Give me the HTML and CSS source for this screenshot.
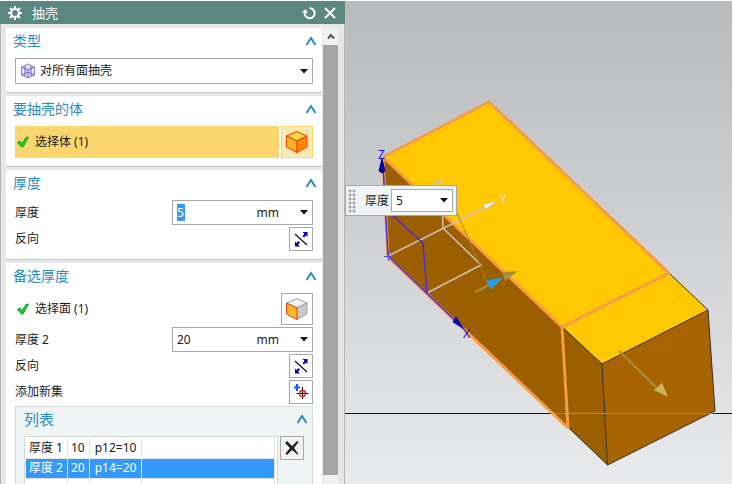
FILE: index.html
```html
<!DOCTYPE html>
<html lang="zh-CN">

<head>
    <meta charset="UTF-8">
    <meta name="viewport" content="width=device-width, initial-scale=1.0">
    <title>抽壳</title>
    <link rel="stylesheet" href="styles.css">
</head>

<body>
    <!-- shared symbols -->
    <svg class="defs" width="0" height="0" aria-hidden="true">
        <symbol id="chevron" viewBox="0 0 12 10">
            <path d="M1.500 9L6 2l4.500 7" fill="none" stroke="#2d8bbd" stroke-width="2"/>
        </symbol>
        <symbol id="check" viewBox="0 0 14 14">
            <path d="M1.500 7.500L4 6l2 3 4-6.500 2.500-.5L7 12H5.500z" fill="#19d234" stroke="#0c9c20" stroke-width="1"/>
        </symbol>
        <symbol id="swap" viewBox="0 0 16 16">
            <path d="M2 3l12 11" stroke="#111" stroke-width="1.200"/>
            <path d="M14.500 1v5l-1.500-1.500-2 2-1.500-1.500L11.500 3 9.500 1zM2 15.500v-5L3.500 12l2-2L7 11.500 5 13.500 7 15.500z" fill="#0000a8"/>
        </symbol>
    </svg>

    <section class="panel">
        <header class="titlebar">
            <svg width="14" height="14" viewBox="0 0 14 14" fill="none" stroke="#fff">
                <circle cx="7" cy="7" r="4" stroke-width="2.200"/>
                <path d="M7 0v2.500M7 11.500V14M0 7h2.500M11.500 7H14M2 2l2 2M10 10l2 2M12 2l-2 2M4 10l-2 2" stroke-width="2"/>
            </svg>
            <h1>抽壳</h1>
            <button type="button" class="title-btn" aria-label="重置">
                <svg width="14" height="14" viewBox="0 0 14 14">
                    <path d="M7.500 2.200A5 5 0 1 1 3 5.500" fill="none" stroke="#fff" stroke-width="2"/>
                    <path d="M0 6.500L3.500 3l2.500 4z" fill="#fff"/>
                </svg>
            </button>
            <button type="button" class="title-btn" aria-label="关闭">
                <svg width="12" height="12" viewBox="0 0 12 12">
                    <path d="M1 1l10 10M11 1L1 11" stroke="#fff" stroke-width="2"/>
                </svg>
            </button>
        </header>

        <div class="panel-body">
            <div class="groups">
                <section class="group">
                    <div class="group-head">
                        <h2>类型</h2>
                        <button type="button" class="fold" aria-label="折叠类型"><svg width="12" height="10"><use href="#chevron"/></svg></button>
                    </div>
                    <div class="type-box">
                        <svg width="16" height="16" viewBox="0 0 16 16" fill="#e4e0f8" stroke="#85859c">
                            <path d="M8 1l6.500 3v8L8 15l-6.500-3V4z"/>
                            <path d="M1.500 4L8 7l6.500-3M8 7v8M1.500 12L8 9l6.500 3M5 3v10M11 3v10" fill="none" stroke="#7562d0" stroke-width="1"/>
                        </svg>
                        <select aria-label="类型">
                            <option>对所有面抽壳</option>
                        </select>
                    </div>
                </section>

                <section class="group">
                    <div class="group-head">
                        <h2>要抽壳的体</h2>
                        <button type="button" class="fold" aria-label="折叠要抽壳的体"><svg width="12" height="10"><use href="#chevron"/></svg></button>
                    </div>
                    <div class="row pick active">
                        <span class="pick-label"><svg width="14" height="14"><use href="#check"/></svg>选择体 (1)</span>
                        <button type="button" class="tool big" aria-label="选择体">
                            <svg width="24" height="24" viewBox="0 0 24 24" stroke="#f03a10" stroke-linejoin="round">
                                <path d="M12 1.500L22 6l-10 5L1.500 6z" fill="#ffd83a"/>
                                <path d="M1.500 6L12 11v11.500L1.500 17z" fill="#ffb51c"/>
                                <path d="M22 6l-10 5v11.500L22 17z" fill="#ff8a08"/>
                            </svg>
                        </button>
                    </div>
                </section>

                <section class="group">
                    <div class="group-head">
                        <h2>厚度</h2>
                        <button type="button" class="fold" aria-label="折叠厚度"><svg width="12" height="10"><use href="#chevron"/></svg></button>
                    </div>
                    <div class="row">
                        <label for="thickness">厚度</label>
                        <div class="field">
                            <span class="value"><input id="thickness" class="selected-text" type="text" value="5"></span>
                            <span class="unit">mm</span>
                            <button type="button" class="drop" aria-label="厚度选项"></button>
                        </div>
                    </div>
                    <div class="row">
                        <span>反向</span>
                        <button type="button" class="tool" aria-label="反向"><svg width="16" height="16"><use href="#swap"/></svg></button>
                    </div>
                </section>

                <section class="group">
                    <div class="group-head">
                        <h2>备选厚度</h2>
                        <button type="button" class="fold" aria-label="折叠备选厚度"><svg width="12" height="10"><use href="#chevron"/></svg></button>
                    </div>
                    <div class="row pick">
                        <span class="pick-label"><svg width="14" height="14"><use href="#check"/></svg>选择面 (1)</span>
                        <button type="button" class="tool big" aria-label="选择面">
                            <svg width="24" height="24" viewBox="0 0 24 24" stroke="#a0a0a0" stroke-linejoin="round">
                                <path d="M12 1.500L22 6l-10 5L1.500 6z" fill="#f2f0f4"/>
                                <path d="M22 6l-10 5v11.500L22 17z" fill="#c9c9c9"/>
                                <path d="M1.500 6L12 11v11.500L1.500 17z" fill="#ffb82a" stroke="#f03a10"/>
                            </svg>
                        </button>
                    </div>
                    <div class="row">
                        <label for="thickness2">厚度 2</label>
                        <div class="field">
                            <span class="value"><input id="thickness2" type="text" value="20"></span>
                            <span class="unit">mm</span>
                            <button type="button" class="drop" aria-label="厚度 2 选项"></button>
                        </div>
                    </div>
                    <div class="row">
                        <span>反向</span>
                        <button type="button" class="tool" aria-label="反向"><svg width="16" height="16"><use href="#swap"/></svg></button>
                    </div>
                    <div class="row">
                        <span>添加新集</span>
                        <button type="button" class="tool" aria-label="添加新集">
                            <svg width="16" height="16" viewBox="0 0 16 16" fill="none">
                                <path d="M4 0v7M1 3.500h6" stroke="#0a5cff" stroke-width="2"/>
                                <path d="M9.500 3v12M3.500 9.500h12" stroke="#111"/>
                                <circle cx="9.500" cy="9.500" r="3" stroke="#e81818" stroke-width="1.300"/>
                            </svg>
                        </button>
                    </div>

                    <div class="list">
                        <div class="group-head">
                            <h3>列表</h3>
                            <button type="button" class="fold" aria-label="折叠列表"><svg width="12" height="10"><use href="#chevron"/></svg></button>
                        </div>
                        <div class="list-body">
                            <div class="table-box">
                                <table>
                                    <tr><td>厚度 1</td><td>10</td><td class="expr">p12=10</td><td class="rest"></td></tr>
                                    <tr class="current"><td>厚度 2</td><td>20</td><td class="expr">p14=20</td><td class="rest"></td></tr>
                                    <tr><td></td><td></td><td class="expr"></td><td class="rest"></td></tr>
                                    <tr><td></td><td></td><td class="expr"></td><td class="rest"></td></tr>
                                </table>
                            </div>
                            <button type="button" class="tool remove" aria-label="移除">
                                <svg width="16" height="16" viewBox="0 0 16 16">
                                    <path d="M1 3l2-2 5 5 5-5 1.500 1L10 8l4.500 6-1 .5L8 10l-5 5-1.500-1.500L6 8z" fill="#222"/>
                                </svg>
                            </button>
                        </div>
                    </div>
                </section>
            </div>

            <div class="scrollbar">
                <div class="scroll-up">
                    <svg width="8" height="7" viewBox="0 0 8 7"><path d="M1 5.500l3-3.500 3 3.500" fill="none" stroke="#555" stroke-width="2"/></svg>
                </div>
                <div class="thumb"></div>
            </div>
        </div>
    </section>

    <main class="view">
        <svg class="scene" viewBox="345 1 387 483" preserveAspectRatio="xMinYMin meet">
            <path class="horizon" d="M345 413.500h387"/>

            <!-- solid body -->
            <path d="M383 157L489 102 708 310 602 364z" fill="#ffc800"/>
            <path d="M383 157L602 364 607.500 465 388 257z" fill="#9c5f00"/>
            <path d="M602 364L708 310 715 411 607.500 465z" fill="#a86400"/>
            <path d="M669 273L708 310 715 411 607.500 465 568 427M562 327L602 364 708 310M602 364L607.500 465" fill="none" stroke="#33302c"/>
            <path d="M552 413.500h161" stroke="#8c8c84"/>

            <!-- highlighted edges -->
            <g class="edges">
                <path d="M669 273L489 102 383 157 562 327zM562 327L568 428"/>
                <path d="M383 157L388 257 568 428"/>
            </g>

            <!-- sketch lines -->
            <path d="M388 256L486 207M430 186L441 180 443 228 481 265 427 293" fill="none" stroke="#cbc4bc" stroke-width="1.500"/>
            <path d="M383 165L388 256 464 329M384 208L423 243 427 293" fill="none" stroke="#4a2ae4" stroke-width="1.500"/>
            <path d="M384 256.500h8M388.500 252v9" stroke="#5c50e0"/>
            <path d="M457 213L488 283" stroke="#a08438"/>

            <!-- axes -->
            <path d="M382 159L385 171 382 173 379 171z" fill="#0000a0" stroke="#0000a0"/>
            <path d="M456 317L463 328 453 322z" fill="#0000b8" stroke="#0000b8"/>
            <path d="M497 201L486 209 483 205z" fill="#f4f4f4" stroke="#ccc"/>
            <text x="378" y="159" fill="#1010f0">Z</text>
            <text x="500" y="203" fill="#dedede">Y</text>
            <text x="463" y="338" fill="#1010f0">X</text>

            <!-- direction handles -->
            <path d="M475 292L489 285M619 351L656 387" stroke="#a98d3c" stroke-width="2"/>
            <path d="M502 272L518 271 505 281z" fill="#a98d3c"/>
            <path d="M487 281L502 278 491 289z" fill="#18a0f4" stroke="#18a0f4"/>
            <path d="M662 383L668 397 654 390z" fill="#cbb65c"/>
        </svg>

        <div class="floating">
            <span class="grip"></span>
            <label for="quick">厚度</label>
            <select id="quick">
                <option>5</option>
            </select>
        </div>
    </main>
</body>

</html>
```
FILE: styles.css
```css
* {
    box-sizing: border-box;
}

body {
    display: flex;
    height: 100vh;
    margin: 0;
    padding-top: 1px;
    overflow: hidden;
    background-color: #fff;
    color: #1a1a1a;
    font-family: "Noto Sans", "Noto Sans CJK SC", sans-serif;
    font-size: 12px;
    line-height: 16px;
}

h1, h2, h3 {
    margin: 0;
    font-weight: normal;
}

svg {
    display: block;
}

.defs {
    position: absolute;
}

button, input, select {
    margin: 0;
    padding: 0;
    border: none;
    background: none;
    color: inherit;
    font: inherit;
}

select {
    appearance: none;
    border-radius: 0;
    /* small black triangle */
    background: url("data:image/svg+xml,%3Csvg xmlns='http://www.w3.org/2000/svg' width='8' height='5'%3E%3Cpath d='M0 0h8L4 4.500z' fill='%23111'/%3E%3C/svg%3E") no-repeat right 4px center;
}

/* Dialog */
.panel {
    display: flex;
    flex-direction: column;
    flex: 0 0 345px;
    background-color: #e7e7e7;
}

.titlebar {
    display: flex;
    align-items: center;
    flex-shrink: 0;
    height: 23px;
    padding: 0 9px 0 8px;
    background-color: #5b8781;
    color: #fff;
}

.titlebar h1 {
    flex: 1;
    margin-left: 10px;
    font-size: 13px;
}

.title-btn {
    margin-left: 8px;
}

.panel-body {
    display: flex;
    flex: 1;
    min-height: 0;
    padding: 4px 6px 0 5px;
    border-left: 1px solid #b5b5b5;
    border-right: 1px solid #b5b5b5;
}

.groups {
    flex: 1;
    overflow: hidden;
}

.group {
    margin-bottom: 3px;
    padding: 0 9px 8px;
    display: flex;
    flex-direction: column;
    gap: 2px;
    background-color: #fff;
    border-bottom: 1px solid #c4c4c4;
}

.group-head {
    display: flex;
    align-items: center;
    justify-content: space-between;
    height: 28px;
    padding-bottom: 3px;
    color: #2d8bbd;
}

.group-head h2 {
    margin-left: -2px;
    font-size: 14px;
}

.fold {
    margin-right: -4px;
}

.row {
    display: flex;
    align-items: center;
    justify-content: space-between;
}

.type-box {
    position: relative;
    display: flex;
    height: 26px;
    border: 1px solid #a8a8a8;
}

.type-box svg {
    position: absolute;
    left: 4px;
    top: 4px;
}

.type-box select {
    flex: 1;
    padding-left: 24px;
}

/* Selection rows */
.pick {
    gap: 2px;
}

.pick-label {
    display: flex;
    flex: 1;
    align-items: center;
    gap: 5px;
    height: 32px;
    padding-left: 1px;
}

.active .pick-label {
    background-color: #fbd66e;
}

.tool {
    display: flex;
    align-items: center;
    justify-content: center;
    width: 24px;
    height: 24px;
    border: 1px solid #a8a8a8;
}

.tool.big {
    width: 32px;
    height: 32px;
}

.active .tool {
    background-color: #fbeab0;
    border-color: #fbd66e;
}

/* Value fields */
.field {
    display: flex;
    align-items: center;
    width: 141px;
    height: 25px;
    border: 1px solid #a8a8a8;
}

.value {
    flex: 1;
    padding-left: 4px;
}

.value input {
    display: block;
    width: 60px;
    height: 17px;
    outline: none;
}

.value .selected-text {
    width: 8px;
    background-color: #3399ff;
    color: #fff;
}

.drop {
    width: 33px;
    height: 23px;
    background: url("data:image/svg+xml,%3Csvg xmlns='http://www.w3.org/2000/svg' width='8' height='5'%3E%3Cpath d='M0 0h8L4 4.500z' fill='%23111'/%3E%3C/svg%3E") no-repeat right 4px center;
}

/* List */
.list {
    padding: 0 8px 8px;
    background-color: #eff5f5;
    border: 1px solid #d6dada;
}

.list .group-head {
    height: 29px;
    padding-bottom: 6px;
}

.list h3 {
    font-size: 15px;
}

.list-body {
    display: flex;
    align-items: flex-start;
    gap: 2px;
}

.table-box {
    flex: 1;
    padding: 1px 2px 1px 1px;
    background-color: #fff;
    border: 1px solid #d6dada;
}

table {
    width: 100%;
    border-collapse: collapse;
}

td {
    height: 20px;
    padding: 0 4px 0 3px;
    border-right: 1px solid #e4e4e4;
    border-bottom: 1px solid #e4e4e4;
    white-space: nowrap;
}

td.expr {
    padding: 0 5px;
}

td.rest {
    width: 100%;
}

.current {
    background-color: #3399ff;
    color: #fff;
}

.remove {
    background-color: #f3f3f3;
}

/* Scrollbar */
.scrollbar {
    display: flex;
    flex-direction: column;
    width: 15px;
    margin-left: 1px;
    padding-bottom: 9px;
    background-color: #f0f0f0;
}

.scroll-up {
    display: flex;
    align-items: center;
    justify-content: center;
    height: 17px;
}

.thumb {
    flex: 1;
    background-color: #a6a6a6;
}

/* 3D view */
.view {
    position: relative;
    flex: 1;
    margin-right: 1px;
    background: linear-gradient(#b9babc, #e9eaec);
}

.scene {
    width: 100%;
    height: 100%;
}

.scene text {
    font-size: 12px;
}

.horizon {
    stroke: #2b0c0c;
}

.edges {
    fill: none;
    stroke: #f79b45;
    stroke-width: 3;
    stroke-linejoin: round;
}

/* Quick input over the model */
.floating {
    position: absolute;
    left: 0;
    top: 184px;
    display: flex;
    align-items: center;
    height: 31px;
    padding: 0 3px 0 2px;
    background-color: #eff5f5;
    border: 1px solid #a8a8a8;
}

.grip {
    width: 8px;
    height: 24px;
    margin-right: 9px;
    background: radial-gradient(circle, #aaa 1px, transparent 2px) 0 0 / 4px 4px;
}

.floating select {
    width: 62px;
    height: 23px;
    margin-left: 2px;
    padding-left: 4px;
    background-color: #fff;
    border: 1px solid #a8a8a8;
}
```
